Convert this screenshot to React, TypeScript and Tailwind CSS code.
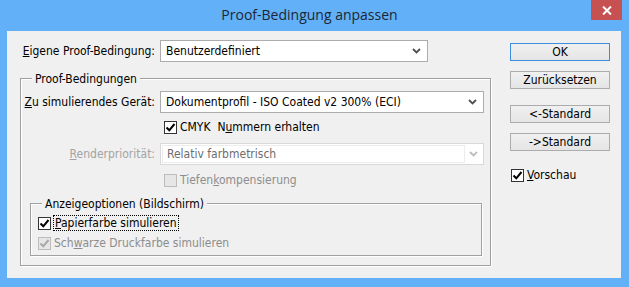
import React from "react";

const FONT = "font-['DejaVu_Sans_Condensed','DejaVu_Sans',sans-serif] text-[12px] leading-[16px]";

function Chevron({ disabled }: { disabled?: boolean }) {
  return (
    <svg width="9" height="6" viewBox="0 0 9 6" className="shrink-0">
      <path
        d="M1 1 L4.5 4.5 L8 1"
        fill="none"
        stroke={disabled ? "#bdbdbd" : "#505050"}
        strokeWidth="1.8"
      />
    </svg>
  );
}

function Select({ value, width, disabled }: { value: string; width: string; disabled?: boolean }) {
  if (disabled) {
    return (
      <div className={`${width} flex h-[22px] items-center border border-[#d9d9d9] bg-white p-[1px]`}>
        <div className="flex h-full flex-1 items-center border border-[#ececec] pl-[4px] text-[#6d6d6d]">
          {value}
        </div>
        <div className="flex w-[17px] justify-center">
          <Chevron disabled />
        </div>
      </div>
    );
  }
  return (
    <div className={`${width} flex h-[22px] items-center border border-[#acacac] bg-white pl-[5px] pr-[6px]`}>
      <span className="flex-1">{value}</span>
      <Chevron />
    </div>
  );
}

function CheckBox({ checked, disabled }: { checked?: boolean; disabled?: boolean }) {
  return (
    <span
      className={`flex h-[13px] w-[13px] shrink-0 items-center justify-center border ${
        disabled ? "border-[#bcbcbc] bg-[#e6e6e6]" : "border-[#333333] bg-white"
      }`}
    >
      {checked && (
        <svg width="11" height="11" viewBox="0 0 11 11">
          <path
            d="M1.5 5.5 L4.3 8.3 L9.5 2"
            fill="none"
            stroke={disabled ? "#a8a8a8" : "#000"}
            strokeWidth="2"
          />
        </svg>
      )}
    </span>
  );
}

function Button({ children, primary }: { children: React.ReactNode; primary?: boolean }) {
  return (
    <div
      className={`flex h-[18px] w-[100px] items-center justify-center border bg-gradient-to-b from-[#f0f0f0] to-[#e5e5e5] ${
        primary ? "border-[#3c8ddb]" : "border-[#acacac]"
      }`}
    >
      {children}
    </div>
  );
}

function Legend({ children, ml }: { children: React.ReactNode; ml: string }) {
  return (
    <div className={`-mt-[8px] ${ml} h-[16px] w-fit bg-[#f0f0f0] px-[3px]`}>{children}</div>
  );
}

export default function App() {
  return (
    <div className={`flex h-[287px] w-[629px] flex-col bg-[#62b1f8] ${FONT} text-black`}>
      {/* Titelleiste */}
      <div className="flex h-[31px] shrink-0">
        <div className="flex flex-1 items-start justify-center pl-[28px] pt-[5px] font-['Open_Sans','Noto_Sans',sans-serif] text-[14px] leading-[20px] text-[#1c2733]">
          Proof-Bedingung anpassen
        </div>
        <div className="mr-[7px] flex h-[20px] w-[31px] items-center justify-center bg-[#c75050]">
          <svg width="10" height="9" viewBox="0 0 10 9">
            <path d="M1 0.5 L9 8.5 M9 0.5 L1 8.5" stroke="#fff" strokeWidth="2" />
          </svg>
        </div>
      </div>

      {/* Client-Bereich */}
      <div className="mb-[9px] ml-[7px] mr-[8px] flex flex-1 bg-[#f0f0f0]">
        {/* linke Spalte */}
        <div className="ml-[13px] flex w-[471px] flex-col">
          <div className="mt-[9px] flex h-[22px] items-center">
            <span className="w-[135px] text-right">
              <u>E</u>igene Proof-Bedingung:
            </span>
            <span className="ml-[5px]">
              <Select value="Benutzerdefiniert" width="w-[268px]" />
            </span>
          </div>

          <div className="mt-[16px] flex h-[188px] w-[471px] flex-col border border-[#a0a0a0] shadow-[1px_1px_0_#fff,inset_1px_1px_0_#fff]">
            <Legend ml="ml-[11px]">Proof-Bedingungen</Legend>

            <div className="mt-[4px] flex h-[22px] items-center">
              <span className="w-[134px] text-right">
                <u>Z</u>u simulierendes Gerät:
              </span>
              <span className="ml-[5px]">
                <Select value="Dokumentprofil - ISO Coated v2 300% (ECI)" width="w-[324px]" />
              </span>
            </div>

            <div className="ml-[143px] mt-[6px] flex h-[16px] items-center gap-[3px]">
              <CheckBox checked />
              <span>
                CMYK&nbsp; N<u>u</u>mmern erhalten
              </span>
            </div>

            <div className="mt-[8px] flex h-[22px] items-center">
              <span className="w-[134px] text-right text-[#a3a3a3]">
                <u>R</u>enderpriorität:
              </span>
              <span className="ml-[5px]">
                <Select value="Relativ farbmetrisch" width="w-[324px]" disabled />
              </span>
            </div>

            <div className="ml-[143px] mt-[7px] flex h-[16px] items-center gap-[3px] text-[#8d8d8d]">
              <CheckBox disabled />
              <span>
                Tiefen<u>k</u>ompensierung
              </span>
            </div>

            <div className="ml-[9px] mt-[15px] flex h-[53px] w-[452px] flex-col border border-[#a0a0a0] shadow-[1px_1px_0_#fff,inset_1px_1px_0_#fff]">
              <Legend ml="ml-[11px]">Anzeigeoptionen (Bildschirm)</Legend>

              <div className="ml-[7px] mt-[3px] flex h-[16px] items-center gap-[2px]">
                <CheckBox checked />
                <span className="border border-dotted border-black px-[1px] leading-[14px]">
                  <u>P</u>apierfarbe simulieren
                </span>
              </div>

              <div className="ml-[7px] mt-[4px] flex h-[16px] items-center gap-[3px] text-[#8d8d8d]">
                <CheckBox checked disabled />
                <span>
                  Sch<u>w</u>arze Druckfarbe simulieren
                </span>
              </div>
            </div>
          </div>
        </div>

        {/* rechte Spalte */}
        <div className="ml-[19px] flex flex-col">
          <div className="mt-[12px]">
            <Button primary>OK</Button>
          </div>
          <div className="mt-[10px]">
            <Button>Zurücksetzen</Button>
          </div>
          <div className="mt-[16px]">
            <Button>&lt;-Standard</Button>
          </div>
          <div className="mt-[10px]">
            <Button>-&gt;Standard</Button>
          </div>
          <div className="ml-[1px] mt-[16px] flex h-[16px] items-center gap-[3px]">
            <CheckBox checked />
            <span>
              <u>V</u>orschau
            </span>
          </div>
        </div>
      </div>
    </div>
  );
}
